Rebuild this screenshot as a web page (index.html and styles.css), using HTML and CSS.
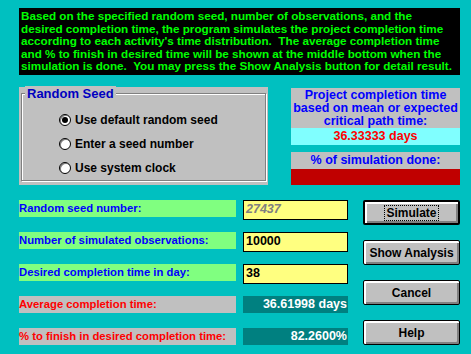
FILE: index.html
```html
<!DOCTYPE html>
<html lang="en">
<head>
    <meta charset="UTF-8">
    <title>Simulation</title>
    <link rel="stylesheet" href="styles.css">
</head>
<body>
    <div class="intro">
        Based on the specified random seed, number of observations, and the<br>
        desired completion time, the program simulates the project completion time<br>
        according to each activity's time distribution.&nbsp; The average completion time<br>
        and % to finish in desired time will be shown at the middle bottom when the<br>
        simulation is done.&nbsp; You may press the Show Analysis button for detail result.
    </div>

    <div class="middle">
        <div class="seed-group">
            <div class="seed-frame">
                <span class="seed-title">Random Seed</span>
                <label class="radio"><span class="dot checked"></span>Use default random seed</label>
                <label class="radio"><span class="dot"></span>Enter a seed number</label>
                <label class="radio"><span class="dot"></span>Use system clock</label>
            </div>
        </div>

        <div class="info">
            <div class="info-text">Project completion time<br>based on mean or expected<br>critical path time:</div>
            <div class="info-value">36.33333 days</div>
            <div class="info-text progress-label">% of simulation done:</div>
            <div class="progress"></div>
        </div>
    </div>

    <div class="bottom">
        <div class="fields">
            <div class="field-label">Random seed number:</div>
            <div class="field-input disabled">27437</div>
            <div class="field-label">Number of simulated observations:</div>
            <div class="field-input">10000</div>
            <div class="field-label">Desired completion time in day:</div>
            <div class="field-input">38</div>
            <div class="field-label result">Average completion time:</div>
            <div class="field-output">36.61998 days</div>
            <div class="field-label result">% to finish in desired completion time:</div>
            <div class="field-output">82.2600%</div>
        </div>
        <div class="buttons">
            <button class="btn default"><span class="focus">Simulate</span></button>
            <button class="btn">Show Analysis</button>
            <button class="btn">Cancel</button>
            <button class="btn">Help</button>
        </div>
    </div>
</body>
</html>
```

FILE: styles.css
```css
/* old windows style dialog */
body {
    margin: 0;
    width: 471px;
    height: 354px;
    background-color: #00C0C0;
    font-family: "Liberation Sans", Arial, sans-serif;
    font-weight: bold;
    font-size: 12px;
    overflow: hidden;
}

.intro {
    margin: 8px 0 0 19px;
    width: 437px;
    height: 63px;
    padding: 2px 2px;
    background-color: #000000;
    color: #00FF00;
    font-size: 11.7px;
    line-height: 12.6px;
    white-space: nowrap;
}

.middle {
    display: flex;
    margin: 12px 0 0 19px;
}

.seed-group {
    width: 249px;
    height: 98px;
    background-color: #C0C0C0;
    padding: 6px 2px 2px 2px;
    box-sizing: border-box;
}

.seed-frame {
    position: relative;
    height: 88px;
    border: 1px solid #808080;
    box-shadow: inset 1px 1px 0 #ffffff, 1px 1px 0 #ffffff;
    padding: 14px 0 0 37px;
    box-sizing: border-box;
}

.seed-title {
    position: absolute;
    top: -8px;
    left: 3px;
    padding: 0 2px;
    background-color: #C0C0C0;
    color: #0000C0;
    font-size: 13px;
}

.radio {
    display: flex;
    align-items: center;
    height: 24px;
    color: #000000;
    font-size: 12px;
}

.dot {
    position: relative;
    width: 12px;
    height: 12px;
    margin-right: 4px;
    border-radius: 50%;
    background-color: #ffffff;
    border: 1px solid #000000;
    box-sizing: border-box;
    box-shadow: inset 1px 1px 0 #808080;
}

.dot.checked::after {
    content: "";
    position: absolute;
    left: 2px;
    top: 2px;
    width: 6px;
    height: 6px;
    border-radius: 50%;
    background-color: #000000;
}

.info {
    margin: 1px 0 0 23px;
    width: 169px;
    text-align: center;
}

.info-text {
    background-color: #C0C0C0;
    color: #0000FF;
    font-size: 12.5px;
    line-height: 13px;
    padding-top: 1px;
    height: 39px;
}

.info-value {
    background-color: #80FFFF;
    color: #FF0000;
    font-size: 12.5px;
    height: 17px;
    line-height: 17px;
}

.progress-label {
    margin-top: 7px;
    height: 17px;
    line-height: 16px;
    padding-top: 0;
}

.progress {
    height: 16px;
    background-color: #C00000;
}

.bottom {
    display: flex;
    margin: 15px 0 0 19px;
}

.fields {
    display: grid;
    grid-template-columns: 217px 105px;
    grid-auto-rows: 17px;
    column-gap: 7px;
    row-gap: 15px;
}

.field-label {
    background-color: #80FF80;
    color: #0000FF;
    font-size: 11.3px;
    line-height: 17px;
    white-space: nowrap;
}

.field-label.result {
    background-color: #C0C0C0;
    color: #FF0000;
}

.field-input {
    background-color: #FFFF80;
    border: 1px solid #000000;
    height: 18px;
    padding-left: 2px;
    line-height: 16px;
    font-size: 12.5px;
    color: #000000;
}

.field-input.disabled {
    color: #808080;
    font-style: italic;
}

.field-output {
    background-color: #008080;
    color: #ffffff;
    text-align: right;
    line-height: 17px;
    font-size: 12.5px;
    padding-right: 1px;
}

.buttons {
    display: flex;
    flex-direction: column;
    gap: 15px;
    margin-left: 15px;
}

.btn {
    width: 97px;
    height: 25px;
    padding: 0;
    background-color: #C0C0C0;
    border: 1px solid #000000;
    border-radius: 2px;
    box-shadow: inset 1px 1px 0 #ffffff, inset 2px 2px 0 #ffffff, inset -1px -1px 0 #808080, inset -2px -2px 0 #808080;
    font-family: "Liberation Sans", Arial, sans-serif;
    font-weight: bold;
    font-size: 12px;
    color: #000000;
}

.btn.default {
    border-width: 2px;
}

.focus {
    border: 1px dotted #000000;
    padding: 0 1px;
}
```
